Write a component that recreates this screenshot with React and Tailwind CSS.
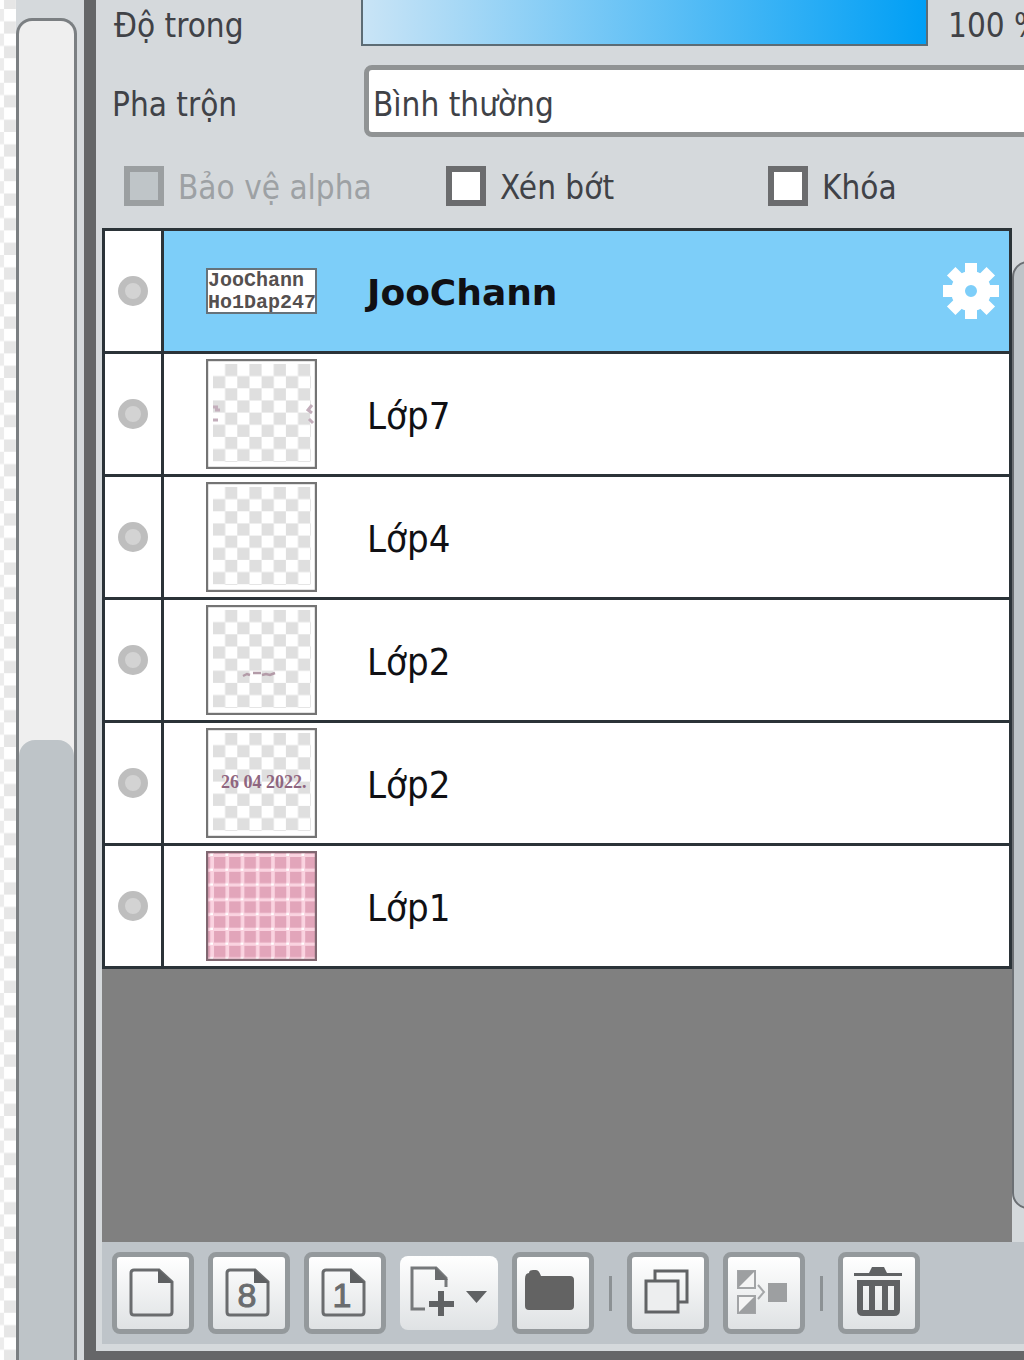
import { useState } from "react";

const LAYERS = [
  { id: 1, name: "JooChann", thumb: "text" },
  { id: 2, name: "Lớp7", thumb: "marks" },
  { id: 3, name: "Lớp4", thumb: "empty" },
  { id: 4, name: "Lớp2", thumb: "small" },
  { id: 5, name: "Lớp2", thumb: "date" },
  { id: 6, name: "Lớp1", thumb: "plaid" },
];

export default function App() {
  const [selected, setSelected] = useState(1);
  const [opacity, setOpacity] = useState(100);

  return (
    <div className="flex h-screen min-h-[900px] overflow-hidden bg-[#d5d9dc] font-['DejaVu_Sans_Condensed','DejaVu_Sans',sans-serif] text-[33px] leading-10 text-[#404247]">
      {/* Canvas edge */}
      <svg className="h-full w-4 shrink-0 bg-white" aria-hidden="true">
        <defs>
          <pattern id="canvas-checker" y="9" width="24.6" height="24.6" patternUnits="userSpaceOnUse">
            <rect x="4" y="12.3" width="12.3" height="12.3" fill="#e6e6e6" />
            <rect x="-8.3" width="12.3" height="12.3" fill="#ececec" />
          </pattern>
        </defs>
        <rect width="100%" height="100%" fill="url(#canvas-checker)" />
      </svg>

      {/* Canvas scrollbar */}
      <div className="flex w-[68px] shrink-0 flex-col pr-[7px] pt-[18px]">
        <div className="flex flex-1 flex-col rounded-t-2xl border-x-3 border-t-3 border-[#7b7f82] bg-[#efefef] pt-[719px]">
          <div className="flex-1 rounded-t-2xl bg-[#bec4c8]" />
        </div>
      </div>

      {/* Layer panel */}
      <main className="flex min-w-0 flex-1 flex-col border-b-9 border-l-12 border-[#656668] pb-[7px]">
        <div className="flex h-[46px] shrink-0 items-end pl-[18px]">
          <label htmlFor="opacity" className="w-[247px] shrink-0">Độ trong</label>
          <input
            id="opacity"
            type="range"
            value={opacity}
            onChange={(e) => setOpacity(Number(e.target.value))}
            className="h-[60px] min-w-0 flex-1 appearance-none border-2 border-[#5c6c75] bg-linear-to-r/srgb from-[#c9e4f6] to-[#009ff5] [&::-webkit-slider-thumb]:appearance-none"
          />
          <output htmlFor="opacity" className="w-[96px] shrink-0 overflow-hidden whitespace-nowrap pl-5">
            {opacity} %
          </output>
        </div>

        <div className="mt-[19px] flex shrink-0 items-center pl-4">
          <label htmlFor="blend" className="w-[252px] shrink-0 pt-2">Pha trộn</label>
          <select
            id="blend"
            className="-mr-5 h-[72px] min-w-0 flex-1 appearance-none rounded-lg border-5 border-[#909394] bg-white pl-1 pt-2"
          >
            <option>Bình thường</option>
          </select>
        </div>

        <div className="mt-[29px] flex h-10 shrink-0 items-center pl-7">
          <CheckOption id="alpha" label="Bảo vệ alpha" disabled />
          <CheckOption id="clip" label="Xén bớt" />
          <CheckOption id="lock" label="Khóa" />
        </div>

        <div className="mt-[22px] flex min-h-0 flex-1 pl-[6px]">
          <ul className="min-w-0 flex-1 bg-[#808080]">
            {LAYERS.map((layer) => (
              <LayerRow
                key={layer.id}
                layer={layer}
                active={layer.id === selected}
                onSelect={() => setSelected(layer.id)}
              />
            ))}
          </ul>
          <div className="flex w-3 shrink-0 overflow-hidden pb-[33px] pt-[33px]">
            <div className="w-12 shrink-0 rounded-2xl border-2 border-[#6b6f73] bg-[#bec4c8]" />
          </div>
        </div>

        <Toolbar />
      </main>
    </div>
  );
}

function CheckOption({ id, label, disabled }) {
  return (
    <div className="flex w-[322px] shrink-0 items-center gap-[14px]">
      <input
        id={id}
        type="checkbox"
        disabled={disabled}
        className="size-10 shrink-0 appearance-none border-6 border-[#6b6c6e] bg-white checked:bg-[#7dcef9] disabled:border-[#9b9fa1] disabled:bg-[#bfc5c8]"
      />
      <label htmlFor={id} className={disabled ? "pt-1 text-[#9da1a4]" : "pt-1"}>{label}</label>
    </div>
  );
}

function LayerRow({ layer, active, onSelect }) {
  return (
    <li className="flex h-[123px] border-x-3 border-b-3 border-[#2b3338] bg-white first:h-[126px] first:border-t-3">
      <button aria-label="Hiển thị" className="flex w-[59px] shrink-0 items-center justify-center border-r-3 border-[#2b3338]">
        <span className="size-[30px] rounded-full border-7 border-[#bebebe] bg-[#d3d3d3]" />
      </button>
      <div className={`flex min-w-0 flex-1 items-center pl-[42px] ${active ? "bg-[#7dcef9]" : ""}`}>
        <Thumb kind={layer.thumb} />
        <button
          onClick={onSelect}
          className={`ml-[50px] flex-1 pt-1 text-left leading-[48px] text-[#101014] ${active ? "font-['DejaVu_Sans',sans-serif] text-[36px] font-bold" : "text-[38px]"}`}
        >
          {layer.name}
        </button>
        {active && (
          <button aria-label="Cài đặt lớp" className="mr-[10px]">
            <GearIcon />
          </button>
        )}
      </div>
    </li>
  );
}

function Thumb({ kind }) {
  if (kind === "text") {
    return (
      <div className="h-[46px] w-[111px] shrink-0 overflow-hidden border-2 border-[#66727a] bg-white font-['Liberation_Mono',monospace] text-[20px] font-bold leading-[22px] text-[#55504f]">
        <p>JooChann</p>
        <p>Ho1Dap247</p>
      </div>
    );
  }
  return (
    <svg viewBox="0 0 111 110" className="h-[110px] w-[111px] shrink-0" aria-hidden="true">
      <defs>
        <pattern id="thumb-checker" x="7" y="5" width="24.3" height="24.3" patternUnits="userSpaceOnUse">
          <rect x="12.1" width="12.2" height="12.2" fill="#dfdfdf" />
          <rect y="12.1" width="12.2" height="12.2" fill="#dfdfdf" />
        </pattern>
        <pattern id="thumb-plaid" x="7" y="5" width="15.2" height="14.8" patternUnits="userSpaceOnUse">
          <rect width="15.2" height="14.8" fill="#fad3e0" />
          <rect x="1" y="1" width="11.500" height="11.500" fill="#e2a5ba" />
          <rect x="12.500" y="12.500" width="2.700" height="2.300" fill="#fff" />
        </pattern>
      </defs>
      <rect width="111" height="110" fill="#fff" />
      {kind === "plaid" ? (
        <rect width="111" height="110" fill="url(#thumb-plaid)" />
      ) : (
        <rect x="7" y="5" width="98" height="98" fill="url(#thumb-checker)" />
      )}
      {kind === "marks" && (
        <path d="M7 48h5M9 51h5M7 61h5M106 46l-4 5 4 3M103 60l4 4" stroke="#c3aebb" strokeWidth="3" fill="none" />
      )}
      {kind === "small" && (
        <path d="M37 71l4-2 3 1M47 68h8M56 70l4-1 4 1 5-2" stroke="#b39ba8" strokeWidth="2.500" fill="none" />
      )}
      {kind === "date" && (
        <text x="15" y="60" fontSize="18" fontWeight="bold" fontFamily="Liberation Serif, serif" fill="#8f6680">
          26 04 2022.
        </text>
      )}
      <rect x="1" y="1" width="109" height="108" fill="none" stroke={kind === "plaid" ? "#806771" : "#747474"} strokeWidth="2.4" />
    </svg>
  );
}

function GearIcon() {
  return (
    <svg viewBox="-28 -28 56 56" className="size-14" aria-hidden="true">
      <circle r="13" fill="none" stroke="#fff" strokeWidth="14" />
      {[0, 45, 90, 135].map((angle) => (
        <path
          key={angle}
          d="M-6-28H6V-14H-6ZM-6 28H6V14H-6Z"
          fill="#fff"
          transform={`rotate(${angle})`}
        />
      ))}
    </svg>
  );
}

function Toolbar() {
  return (
    <div className="ml-[6px] flex h-[102px] shrink-0 items-center gap-[14px] bg-[#bec4c9] pl-[10px]">
      <ToolButton label="Lớp mới">
        <PageShape />
      </ToolButton>
      <ToolButton label="Lớp 8 bit">
        <PageShape />
        <text x="39" y="55" textAnchor="middle" fontSize="34" fontFamily="Liberation Sans, sans-serif" fill="#6a6c6e" stroke="#6a6c6e">8</text>
      </ToolButton>
      <ToolButton label="Lớp 1 bit">
        <PageShape />
        <text x="38" y="55" textAnchor="middle" fontSize="34" fontFamily="Liberation Sans, sans-serif" fill="#6a6c6e" stroke="#6a6c6e">1</text>
      </ToolButton>
      <button aria-label="Thêm lớp" className="h-[74px] w-[98px] rounded-lg bg-linear-to-b from-white to-[#dfe2e4]">
        <svg viewBox="0 0 98 74" className="h-[74px] w-[98px]" aria-hidden="true">
          <path d="M25 53H12V12H36L46 22V31" fill="none" stroke="#76797b" strokeWidth="3" />
          <path d="M35 11V24H48Z" fill="#696b6d" />
          <path d="M41 35V60M29 48H54" stroke="#606264" strokeWidth="6" />
          <path d="M66 35H87L76.500 47Z" fill="#606264" />
        </svg>
      </button>
      <ToolButton label="Thư mục">
        <path d="M13 27Q13 21 17 21Q17 18 21 18H24Q27 18 29 24H58Q62 24 62 28V54Q62 58 58 58H17Q13 58 13 54Z" fill="#636363" />
      </ToolButton>
      <Separator />
      <ToolButton label="Nhân đôi">
        <rect x="28" y="19" width="32" height="31" fill="none" stroke="#616365" strokeWidth="3" />
        <rect x="19" y="29" width="32" height="31" fill="#edeeef" stroke="#616365" strokeWidth="3" />
      </ToolButton>
      <ToolButton label="Gộp xuống">
        <rect x="15" y="19" width="17" height="17" fill="#f4f4f4" stroke="#a2a4a6" strokeWidth="2" />
        <path d="M15 36V19H32Z" fill="#9d9fa1" />
        <rect x="15" y="44" width="17" height="17" fill="#f4f4f4" stroke="#a2a4a6" strokeWidth="2" />
        <path d="M15 61H32V44Z" fill="#9d9fa1" />
        <path d="M35 33L41 40L35 47" fill="none" stroke="#a5a7a9" strokeWidth="2" />
        <rect x="45" y="31" width="19" height="19" fill="#9d9fa1" />
      </ToolButton>
      <Separator />
      <ToolButton label="Xóa lớp">
        <path d="M31 21L34 15H46L49 21H64V24H16V21Z" fill="#606264" />
        <path
          fillRule="evenodd"
          d="M19 28H62V58Q62 64 56 64H25Q19 64 19 58ZM25 34V58H31V34ZM37 34V58H44V34ZM50 34V58H56V34Z"
          fill="#606264"
        />
      </ToolButton>
    </div>
  );
}

function ToolButton({ label, children }) {
  return (
    <button
      aria-label={label}
      className="size-[82px] shrink-0 rounded-lg border-5 border-[#94999c] bg-linear-to-b from-white to-[#dfe2e4]"
    >
      <svg viewBox="5 5 72 72" className="size-[72px]" aria-hidden="true">
        {children}
      </svg>
    </button>
  );
}

function PageShape() {
  return (
    <>
      <path d="M47 18H22Q19 18 19 21V60Q19 63 22 63H57Q60 63 60 60V30Z" fill="none" stroke="#6a6c6e" strokeWidth="3" />
      <path d="M46 17V31H61Z" fill="#5e6062" />
    </>
  );
}

function Separator() {
  return <div className="mx-px h-[35px] w-[3px] shrink-0 bg-[#8c9194]" />;
}
